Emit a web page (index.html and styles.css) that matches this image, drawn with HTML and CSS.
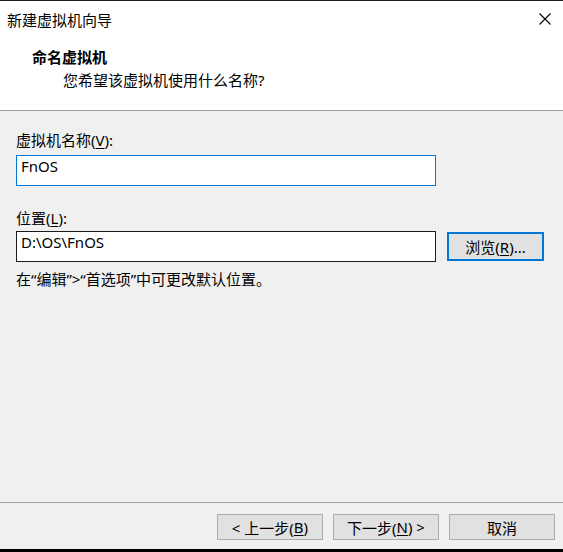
FILE: index.html
```html
<!DOCTYPE html>
<html lang="zh-CN">
<head>
<meta charset="utf-8">
<title>新建虚拟机向导</title>
<link rel="stylesheet" href="styles.css">
</head>
<body>
<div class="window">
  <div class="top">
    <div class="titlebar">
      <span class="title">新建虚拟机向导</span>
      <svg class="close" width="12" height="12" viewBox="0 0 12 12"><path d="M0.5 0.5 L11.5 11.5 M11.5 0.5 L0.5 11.5" stroke="#000" stroke-width="1.1" fill="none"/></svg>
    </div>
    <div class="header">
      <div class="h-title">命名虚拟机</div>
      <div class="h-sub">您希望该虚拟机使用什么名称?</div>
    </div>
  </div>
  <div class="content">
    <div class="label label-first">虚拟机名称(<u>V</u>):</div>
    <div class="field field-focus">FnOS</div>
    <div class="label label-second">位置(<u>L</u>):</div>
    <div class="row">
      <div class="field field-path">D:\OS\FnOS</div>
      <div class="btn btn-browse">浏览(<u>R</u>)...</div>
    </div>
    <div class="hint">在“编辑”&gt;“首选项”中可更改默认位置。</div>
  </div>
  <div class="footer">
    <div class="btn btn-foot">&lt; 上一步(<u>B</u>)</div>
    <div class="btn btn-foot">下一步(<u>N</u>) &gt;</div>
    <div class="btn btn-foot">取消</div>
  </div>
</div>
</body>
</html>
```

FILE: styles.css
```css
html, body {
  margin: 0;
  padding: 0;
}
body {
  background: #f0f0f0;
  font-family: "Noto Sans", "Noto Sans CJK SC", sans-serif;
  font-size: 15px;
  color: #000;
}
.window {
  width: 563px;
  height: 552px;
  box-sizing: border-box;
  border-top: 1px solid #1f1f1f;
  border-bottom: 3px solid #000;
  display: flex;
  flex-direction: column;
  background: #f0f0f0;
}
.top {
  height: 110px;
  box-sizing: border-box;
  background: #fff;
  border-bottom: 1px solid #a0a0a0;
}
.titlebar {
  height: 38px;
  display: flex;
  justify-content: space-between;
  align-items: flex-start;
}
.title {
  line-height: 38px;
  padding-left: 7px;
}
.close {
  margin-top: 12px;
  margin-right: 12px;
  display: block;
}
.header {
  padding-left: 32px;
  padding-top: 7px;
}
.h-title {
  font-weight: bold;
  line-height: 23px;
}
.h-sub {
  line-height: 23px;
  padding-left: 31px;
}
.content {
  padding: 18px 16px 0 16px;
  display: flex;
  flex-direction: column;
}
.label {
  line-height: 22px;
}
u {
  text-underline-offset: 2px;
  text-decoration-thickness: 1px;
}
.field {
  box-sizing: border-box;
  width: 420px;
  height: 31px;
  background: #fff;
  padding: 0 4px;
  line-height: 20px;
}
.field-focus {
  margin-top: 4px;
  border: 1px solid #0078d7;
}
.label-second {
  margin-top: 21px;
}
.row {
  margin-top: 2px;
  display: flex;
  align-items: center;
  gap: 11px;
}
.field-path {
  border: 1px solid #1b1b1b;
}
.btn {
  box-sizing: border-box;
  background: #e1e1e1;
  display: flex;
  align-items: center;
  justify-content: center;
}
.btn-browse {
  width: 97px;
  height: 29px;
  border: 2px solid #0078d7;
}
.hint {
  margin-top: 6px;
  line-height: 22px;
}
.footer {
  margin-top: auto;
  height: 47px;
  box-sizing: border-box;
  border-top: 1px solid #a0a0a0;
  padding: 11px 8px 0 0;
  display: flex;
  justify-content: flex-end;
  align-items: flex-start;
  gap: 10px;
}
.btn-foot {
  width: 106px;
  height: 26px;
  border: 1px solid #adadad;
}
```
